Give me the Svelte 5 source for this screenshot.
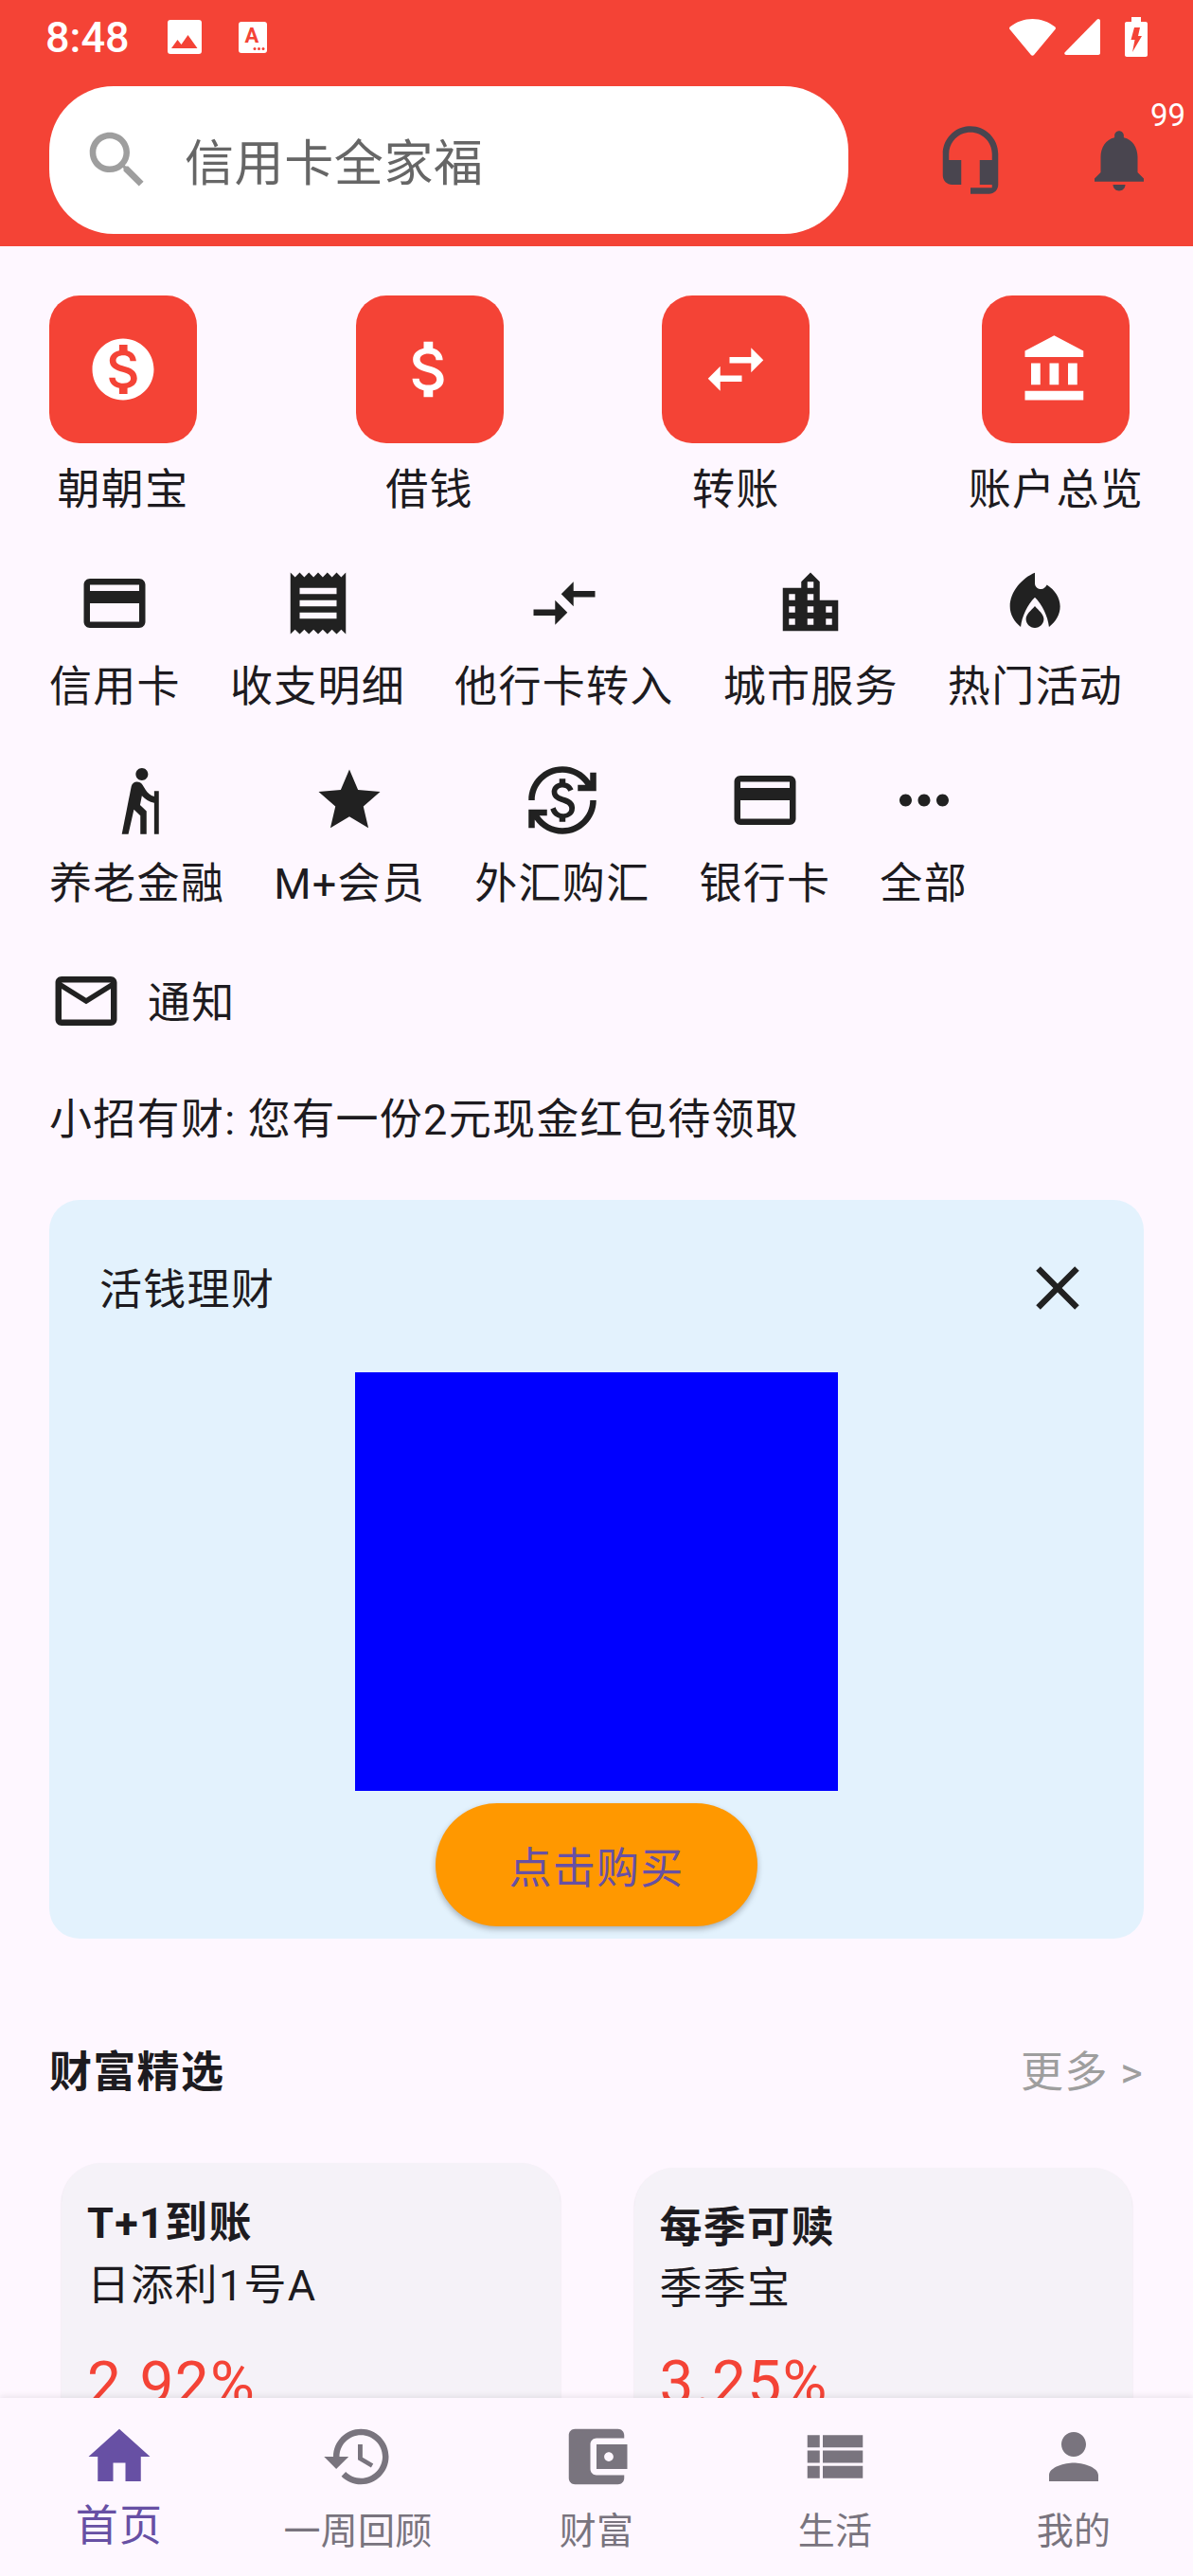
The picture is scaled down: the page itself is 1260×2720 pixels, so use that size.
<script>
  const icons = {
    search: "M15.5 14h-.79l-.28-.27C15.41 12.59 16 11.11 16 9.5 16 5.91 13.09 3 9.5 3S3 5.91 3 9.5 5.91 16 9.5 16c1.61 0 3.09-.59 4.23-1.57l.27.28v.79l5 4.99L20.49 19l-4.99-5zm-6 0C7.01 14 5 11.99 5 9.5S7.01 5 9.5 5 14 7.01 14 9.5 11.99 14 9.5 14z",
    headset: "M12 1c-4.97 0-9 4.03-9 9v7c0 1.66 1.34 3 3 3h3v-8H5v-2c0-3.87 3.13-7 7-7s7 3.13 7 7v2h-4v8h4v1h-7v2h6c1.66 0 3-1.34 3-3V10c0-4.97-4.03-9-9-9z",
    bell: "M12 22c1.1 0 2-.9 2-2h-4c0 1.1.89 2 2 2zm6-6v-5c0-3.07-1.64-5.64-4.5-6.32V4c0-.83-.67-1.5-1.5-1.5s-1.5.67-1.5 1.5v.68C7.63 5.36 6 7.92 6 11v5l-2 2v1h16v-1l-2-2z",
    coin: "M12 2C6.48 2 2 6.48 2 12s4.48 10 10 10 10-4.48 10-10S17.52 2 12 2zm1.41 16.09V20h-2.67v-1.93c-1.71-.36-3.16-1.46-3.27-3.4h1.96c.1 1.05.82 1.87 2.65 1.87 1.96 0 2.4-.98 2.4-1.59 0-.83-.44-1.61-2.67-2.14-2.48-.6-4.18-1.62-4.18-3.67 0-1.72 1.39-2.84 3.11-3.21V4h2.67v1.95c1.86.45 2.79 1.86 2.85 3.39H14.3c-.05-1.11-.64-1.87-2.22-1.87-1.5 0-2.4.68-2.4 1.64 0 .84.65 1.39 2.67 1.91s4.18 1.39 4.18 3.91c-.01 1.83-1.38 2.83-3.12 3.16z",
    money: "M11.8 10.9c-2.27-.59-3-1.2-3-2.15 0-1.09 1.01-1.85 2.7-1.85 1.78 0 2.44.85 2.5 2.1h2.21c-.07-1.72-1.12-3.3-3.21-3.81V3h-3v2.16c-1.94.42-3.5 1.68-3.5 3.61 0 2.31 1.91 3.46 4.7 4.13 2.5.6 3 1.48 3 2.41 0 .69-.49 1.79-2.7 1.79-2.06 0-2.87-.92-2.98-2.1h-2.2c.12 2.19 1.76 3.42 3.68 3.83V21h3v-2.15c1.95-.37 3.5-1.5 3.5-3.55 0-2.84-2.43-3.81-4.7-4.4z",
    swap: "M6.99 11L3 15l3.99 4v-3H14v-2H6.99v-3zM21 9l-3.99-4v3H10v2h7.01v3L21 9z",
    bank: "M4 10v7h3v-7H4zm6 0v7h3v-7h-3zM2 22h19v-3H2v3zm14-12v7h3v-7h-3zm-4.5-9L2 6v2h19V6l-9.5-5z",
    card: "M20 4H4c-1.11 0-1.99.89-1.99 2L2 18c0 1.11.89 2 2 2h16c1.11 0 2-.89 2-2V6c0-1.11-.89-2-2-2zm0 14H4v-6h16v6zm0-10H4V6h16v2z",
    receipt: "M18 17H6v-2h12v2zm0-4H6v-2h12v2zm0-4H6V7h12v2zM3 22l1.5-1.5L6 22l1.5-1.5L9 22l1.5-1.5L12 22l1.5-1.5L15 22l1.5-1.5L18 22l1.5-1.5L21 22V2l-1.5 1.5L18 2l-1.5 1.5L15 2l-1.5 1.5L12 2l-1.5 1.5L9 2 7.5 3.5 6 2 4.5 3.5 3 2v20z",
    compare: "M9.01 14H2v2h7.01v3L13 15l-3.99-4v3zm5.98-1v-3H22V8h-7.01V5L11 9l3.99 4z",
    city: "M15 11V5l-3-3-3 3v2H3v14h18V11h-6zm-8 8H5v-2h2v2zm0-4H5v-2h2v2zm0-4H5V9h2v2zm6 8h-2v-2h2v2zm0-4h-2v-2h2v2zm0-4h-2V9h2v2zm0-4h-2V5h2v2zm6 12h-2v-2h2v2zm0-4h-2v-2h2v2z",
    fire: "M12 2.1V5.5c0 1.1 1 1.9 2.1 1.9.7 0 1.3-.5 1.8-1.4C18.5 7.7 20.2 10.2 20.2 13c0 2.6-1.4 5-3.6 6.7-.4-3.5-2.2-7.2-4.6-9.6-2.4 2.4-4.2 6.1-4.6 9.6C5.3 18 3.9 15.6 3.9 13 3.9 8.2 8 3.7 12 2.1zM12 12.9c-1.2 1.4-2.9 2.6-2.9 4.2 0 1.6 1.3 2.9 2.9 2.9s2.9-1.3 2.9-2.9c0-1.6-1.7-2.8-2.9-4.2z",
    elderly: "M13.5 5.5c1.1 0 2-.9 2-2s-.9-2-2-2-2 .9-2 2 .9 2 2 2zM17.5 10.78c-1.23-.37-2.22-1.17-2.8-2.18l-1-1.6c-.41-.65-1.11-1-1.84-1-.78 0-1.59.5-1.78 1.44S7 23 7 23h2.1l1.8-8 2.1 2v6h2v-7.5l-2.1-2 .6-3c1 1.15 2.41 2.01 4 2.34V23H19V9h-1.5v1.78z",
    star: "M12 17.27L18.18 21l-1.64-7.03L22 9.24l-7.19-.61L12 2 9.19 8.63 2 9.24l5.46 4.73L5.82 21z",
    exchange: "M12.89 11.1c-1.78-.59-2.64-.96-2.64-1.9 0-1.02 1.11-1.39 1.81-1.39 1.31 0 1.79.99 1.9 1.34l1.58-.67c-.15-.44-.82-1.91-2.54-2.16V5h-2v1.31c-2.48.56-2.49 2.86-2.49 2.96 0 2.31 2.29 3 3.4 3.4 1.61.57 2.32 1.09 2.32 2.07 0 1.15-1.08 1.64-2.03 1.64-1.86 0-2.39-1.91-2.45-2.14l-1.66.67c.6 2.09 2.17 2.65 2.9 2.83V19h2v-1.25c.52-.09 3.02-.59 3.02-3.22.01-1.39-.6-2.61-3.12-3.43zM3 21H1v-6h6v2H4.52c1.61 2.41 4.36 4 7.48 4 4.97 0 9-4.03 9-9h2c0 6.08-4.92 11-11 11-3.72 0-7.01-1.85-9-4.67V21zm-2-9C1 5.92 5.92 1 12 1c3.72 0 7.01 1.85 9 4.67V3h2v6h-6V7h2.48C17.87 4.59 15.12 3 12 3c-4.97 0-9 4.03-9 9H1z",
    more: "M6 10c-1.1 0-2 .9-2 2s.9 2 2 2 2-.9 2-2-.9-2-2-2zm12 0c-1.1 0-2 .9-2 2s.9 2 2 2 2-.9 2-2-.9-2-2-2zm-6 0c-1.1 0-2 .9-2 2s.9 2 2 2 2-.9 2-2-.9-2-2-2z",
    mail: "M20 4H4c-1.1 0-1.99.9-1.99 2L2 18c0 1.1.9 2 2 2h16c1.1 0 2-.9 2-2V6c0-1.1-.9-2-2-2zm0 14H4V8l8 5 8-5v10zm-8-7L4 6h16l-8 5z",
    close: "M19 6.41L17.59 5 12 10.59 6.41 5 5 6.41 10.59 12 5 17.59 6.41 19 12 13.41 17.59 19 19 17.59 13.41 12z",
    home: "M10 20v-6h4v6h5v-8h3L12 3 2 12h3v8z",
    history: "M13 3c-4.97 0-9 4.03-9 9H1l3.89 3.89.07.14L9 12H6c0-3.87 3.13-7 7-7s7 3.13 7 7-3.13 7-7 7c-1.93 0-3.68-.79-4.94-2.06l-1.42 1.42C8.27 19.99 10.51 21 13 21c4.97 0 9-4.03 9-9s-4.03-9-9-9zm-1 5v5l4.28 2.54.72-1.21-3.5-2.08V8H12z",
    wallet: "M21 18v1c0 1.1-.9 2-2 2H5c-1.11 0-2-.9-2-2V5c0-1.1.89-2 2-2h14c1.1 0 2 .9 2 2v1h-9c-1.11 0-2 .9-2 2v8c0 1.1.89 2 2 2h9zm-9-2h10V8H12v8zm4-2.5c-.83 0-1.5-.67-1.5-1.5s.67-1.5 1.5-1.5 1.5.67 1.5 1.5-.67 1.5-1.5 1.5z",
    list: "M3 14h4v-4H3v4zm0 5h4v-4H3v4zM3 9h4V5H3v4zm5 5h13v-4H8v4zm0 5h13v-4H8v4zM8 5v4h13V5H8z",
    person: "M12 12c2.21 0 4-1.79 4-4s-1.79-4-4-4-4 1.79-4 4 1.79 4 4 4zm0 2c-2.67 0-8 1.34-8 4v2h16v-2c0-2.66-5.33-4-8-4z"
  };

  const tiles = [
    { icon: "coin", label: "朝朝宝" },
    { icon: "money", label: "借钱" },
    { icon: "swap", label: "转账" },
    { icon: "bank", label: "账户总览" }
  ];
  const rowOne = [
    { icon: "card", label: "信用卡" },
    { icon: "receipt", label: "收支明细" },
    { icon: "compare", label: "他行卡转入" },
    { icon: "city", label: "城市服务" },
    { icon: "fire", label: "热门活动" }
  ];
  const rowTwo = [
    { icon: "elderly", label: "养老金融" },
    { icon: "star", label: "M+会员" },
    { icon: "exchange", label: "外汇购汇" },
    { icon: "card", label: "银行卡" },
    { icon: "more", label: "全部" }
  ];
  const products = [
    { title: "T+1到账", name: "日添利1号A", rate: "2.92%" },
    { title: "每季可赎", name: "季季宝", rate: "3.25%" }
  ];
  const tabs = [
    { icon: "home", label: "首页", active: true },
    { icon: "history", label: "一周回顾" },
    { icon: "wallet", label: "财富" },
    { icon: "list", label: "生活" },
    { icon: "person", label: "我的" }
  ];
</script>

{#snippet icon(name)}
  <svg class="icon" viewBox="0 0 24 24" fill="currentColor"><path d={icons[name]} /></svg>
{/snippet}

<div class="app">
  <header class="header">
    <div class="status">
      <span class="time">8:48</span>
      <svg class="st-image" viewBox="0 0 36 36">
        <rect width="36" height="36" rx="3" fill="#fff" />
        <path d="M4 30l6.500-9 4 5 7-10 10 14z" fill="#f44336" />
      </svg>
      <svg class="st-font" viewBox="0 0 30 33">
        <rect width="30" height="33" rx="3" fill="#fff" />
        <text x="14" y="22" class="st-a">A</text>
        <circle cx="17" cy="28.500" r="1.500" fill="#f44336" />
        <circle cx="21.500" cy="28.500" r="1.500" fill="#f44336" />
        <circle cx="26" cy="28.500" r="1.500" fill="#f44336" />
      </svg>
      <div class="status-right">
        <svg class="st-wifi" viewBox="0 0 49 39" fill="#fff">
          <path d="M24.500 0c8.800 0 16.800 3.100 23.700 8.200.9.700 1 1.900.3 2.700L26 38c-.8 1-2.300 1-3.100 0L.5 10.900c-.7-.8-.6-2 .3-2.700C7.700 3.100 15.700 0 24.500 0z" />
        </svg>
        <svg class="st-signal" viewBox="0 0 38 38" fill="#fff">
          <path d="M36 0c1 0 2 .9 2 2v34c0 1-1 2-2 2H2c-1.500 0-2.300-1.700-1.300-2.800L34.500.7c.4-.4 1-.7 1.500-.7z" />
        </svg>
        <svg class="st-battery" viewBox="0 0 24 42">
          <path d="M7 0h10v5h5c1.100 0 2 .9 2 2v33c0 1.100-.9 2-2 2H2c-1.100 0-2-.9-2-2V7c0-1.100.9-2 2-2h5z" fill="#fff" />
          <path d="M10 11h6l-2 9h4L8 37l2.500-13H6.500z" fill="#f44336" />
        </svg>
      </div>
    </div>
    <div class="search-row">
      <div class="search">
        {@render icon("search")}
        <span class="search-text">信用卡全家福</span>
      </div>
      <div class="head-btn headset">{@render icon("headset")}</div>
      <div class="head-btn bell">
        {@render icon("bell")}
        <span class="badge">99</span>
      </div>
    </div>
  </header>

  <main class="main">
    <div class="tiles">
      {#each tiles as t}
        <div class="tile">
          <div class="tile-box">{@render icon(t.icon)}</div>
          <span class="label">{t.label}</span>
        </div>
      {/each}
    </div>

    {#each [rowOne, rowTwo] as row}
      <div class="shortcuts">
        {#each row as s}
          <div class="shortcut">
            {@render icon(s.icon)}
            <span class="label">{s.label}</span>
          </div>
        {/each}
      </div>
    {/each}

    <div class="notice">
      {@render icon("mail")}
      <span>通知</span>
    </div>
    <p class="message">小招有财: 您有一份2元现金红包待领取</p>

    <section class="promo">
      <div class="promo-head">
        <span>活钱理财</span>
        {@render icon("close")}
      </div>
      <div class="promo-image"></div>
      <button class="buy">点击购买</button>
    </section>

    <div class="section-head">
      <span class="section-title">财富精选</span>
      <span class="section-more">更多 &gt;</span>
    </div>

    <div class="products">
      {#each products as p}
        <div class="product">
          <div class="product-title">{p.title}</div>
          <div class="product-name">{p.name}</div>
          <div class="product-rate">{p.rate}</div>
        </div>
      {/each}
    </div>
  </main>

  <nav class="tabbar">
    {#each tabs as t}
      <div class="tab" class:active={t.active}>
        {@render icon(t.icon)}
        <span class="tab-label">{t.label}</span>
      </div>
    {/each}
  </nav>
</div>

<style>
  :global(body) { margin: 0; }
  .app {
    width: 1260px; height: 2720px;
    display: flex; flex-direction: column;
    overflow: hidden;
    background: #fef7ff;
    color: #1d1b20;
    font-family: Roboto, "Noto Sans CJK SC", sans-serif;
    letter-spacing: 1.3px;
  }
  .icon { display: block; width: 78px; height: 78px; flex-shrink: 0; }

  .header { height: 260px; flex-shrink: 0; background: #f44336; letter-spacing: 0; }
  .status {
    height: 78px; margin-bottom: 13px;
    display: flex; align-items: center;
    padding: 0 48px;
    color: #fff;
  }
  .time { font-size: 45px; font-weight: 500; width: 129px; }
  .st-image { width: 36px; height: 36px; margin-right: 39px; }
  .st-font { width: 30px; height: 33px; }
  .st-a { font-size: 22px; font-weight: 700; fill: #f44336; text-anchor: middle; font-family: Roboto, sans-serif; }
  .status-right { margin-left: auto; display: flex; align-items: center; }
  .st-wifi { width: 49px; height: 39px; margin-right: 9px; }
  .st-signal { width: 38px; height: 38px; margin-right: 26px; }
  .st-battery { width: 24px; height: 42px; }

  .search-row { display: flex; align-items: center; padding-left: 52px; }
  .search {
    width: 844px; height: 156px;
    box-sizing: border-box;
    padding-left: 33px;
    display: flex; align-items: center; gap: 32px;
    background: #fff;
    border-radius: 68px;
    color: #9e9e9e;
  }
  .search-text { font-size: 52px; color: #666; line-height: 60px; letter-spacing: 0.6px; margin-top: 9px; }
  .head-btn { color: #49454f; position: relative; }
  .headset { margin-left: 90px; }
  .bell { margin-left: 79px; }
  .badge {
    position: absolute; left: 72px; top: -28px;
    font-size: 33px; line-height: 40px;
    color: #fff;
  }

  .main { flex: 1; min-height: 0; overflow: hidden; padding: 52px 52px 0; }
  .label { font-size: 45px; line-height: 60px; white-space: nowrap; }
  .tiles { display: flex; justify-content: space-between; }
  .tile { display: flex; flex-direction: column; align-items: center; gap: 20px; min-width: 156px; }
  .tile-box {
    width: 156px; height: 156px;
    display: flex; align-items: center; justify-content: center;
    background: #f44336; color: #fff;
    border-radius: 32px;
  }
  .shortcuts { display: flex; gap: 52px; margin-top: 50px; color: #212121; }
  .shortcut { display: flex; flex-direction: column; align-items: center; gap: 20px; }
  .shortcut .label { color: #1d1b20; }

  .notice {
    display: flex; align-items: center; gap: 26px;
    margin-top: 54px;
    color: #212121;
    font-size: 45px;
  }
  .notice span { color: #1d1b20; margin-bottom: 3px; }
  .message { margin: 57px 0 0; font-size: 45px; line-height: 60px; }

  .promo {
    height: 780px;
    box-sizing: border-box;
    margin-top: 54px;
    padding-top: 54px;
    background: #e3f2fd;
    border-radius: 32px;
    display: flex; flex-direction: column; align-items: center;
  }
  .promo-head {
    align-self: stretch;
    display: flex; align-items: center; justify-content: space-between;
    padding: 0 52px 0 53px;
    font-size: 45px;
    color: #1d1b20;
  }
  .promo-head span { margin-bottom: 3px; }
  .promo-head .icon { color: #212121; }
  .promo-image { width: 510px; height: 442px; margin-top: 50px; background: #00f; }
  .buy {
    width: 340px; height: 130px;
    margin-top: 13px;
    border: 0; border-radius: 65px;
    background: #ff9800;
    color: #6750a4;
    font: inherit; font-size: 45px;
    letter-spacing: 1.3px;
    box-shadow: 0 3px 6px rgba(0,0,0,0.28);
  }

  .section-head {
    display: flex; justify-content: space-between; align-items: center;
    margin-top: 112px;
    line-height: 60px;
  }
  .section-title { font-size: 45px; font-weight: 700; }
  .section-more { font-size: 45px; color: #9e9e9e; }

  .products {
    display: flex; gap: 78px;
    margin-top: 65px;
    padding: 0 12px 0 13px;
    align-items: flex-start;
  }
  .product {
    flex: 1;
    height: 420px;
    box-sizing: border-box;
    padding: 34px 27px 0;
    background: #f5f2f8;
    border-radius: 42px;
    box-shadow: 0 1px 2px rgba(0,0,0,0.13);
  }
  .product + .product { margin-top: 5px; }
  .product-title { font-size: 45px; font-weight: 700; line-height: 60px; }
  .product-name { font-size: 45px; line-height: 60px; margin-top: 6px; }
  .product-rate { font-size: 64px; line-height: 80px; margin-top: 34px; color: #f44336; }
  .product + .product .product-name { margin-top: 4px; }
  .product + .product .product-rate { margin-top: 30px; }

  .tabbar {
    height: 188px; flex-shrink: 0;
    box-sizing: border-box;
    padding-top: 23px;
    display: flex;
    position: relative;
    background: #fef7ff;
    box-shadow: 0 -2px 6px rgba(0,0,0,0.08);
    color: #79747e;
  }
  .tab { flex: 1; display: flex; flex-direction: column; align-items: center; }
  .tab-label { font-size: 39px; line-height: 52px; margin-top: 14px; letter-spacing: 0.3px; }
  .tab.active { color: #6750a4; }
  .tab.active .tab-label { font-size: 45px; line-height: 42px; letter-spacing: 1.3px; }
</style>
